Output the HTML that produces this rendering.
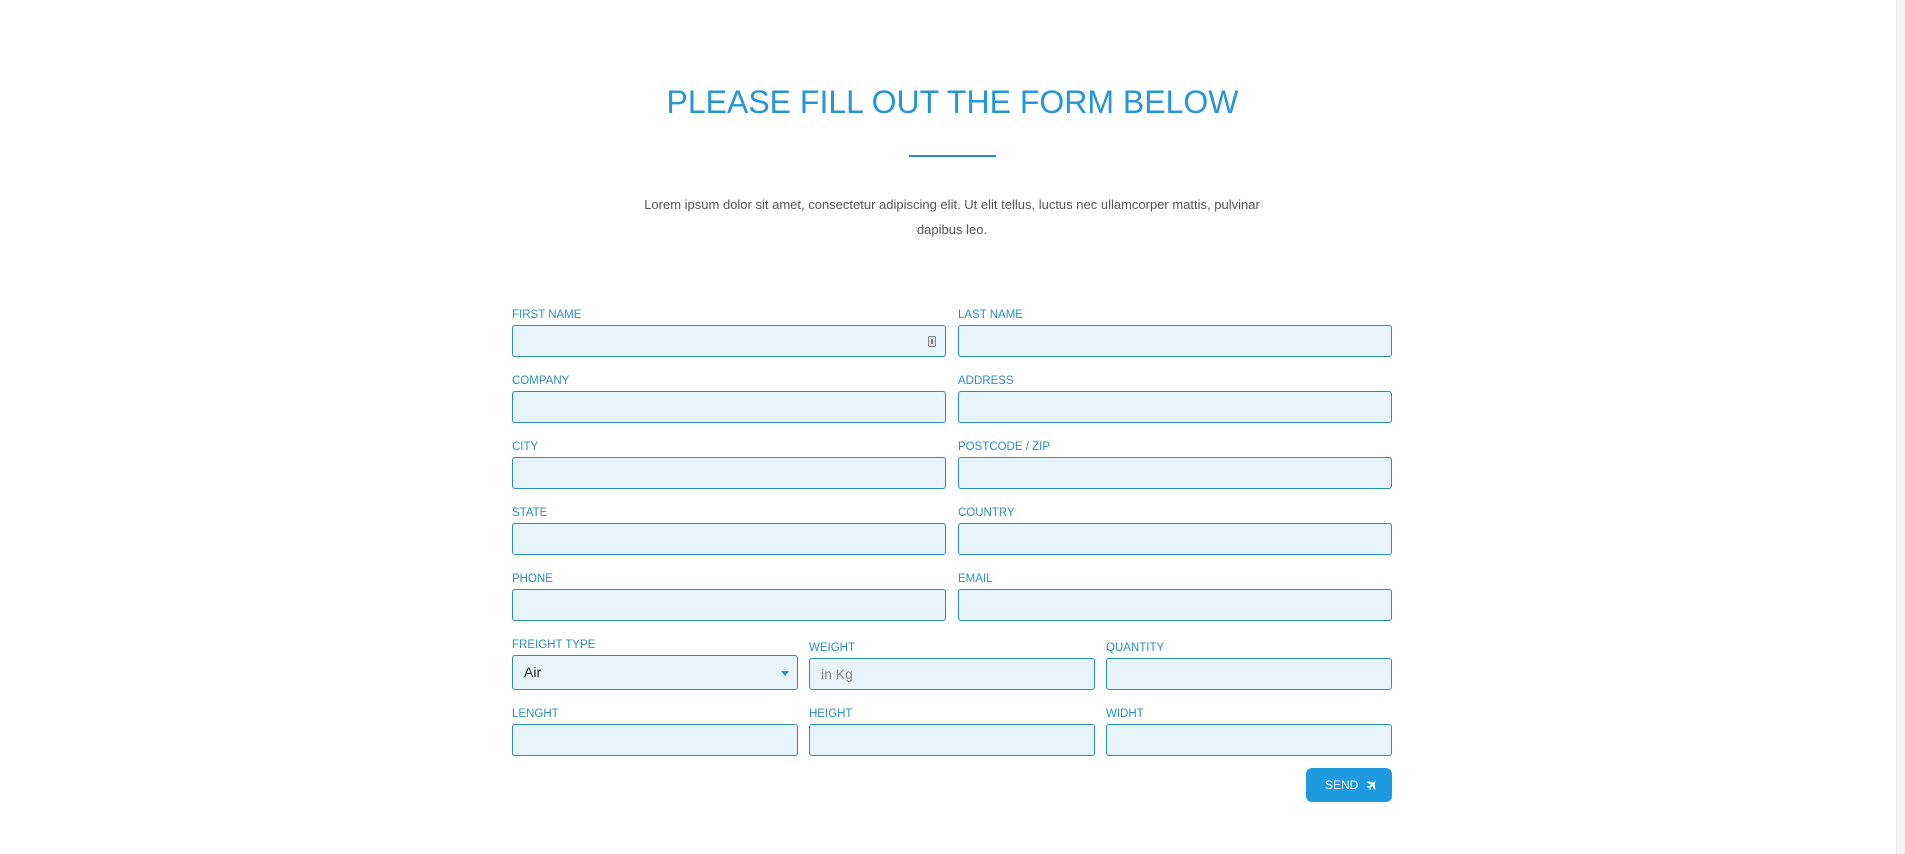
<!DOCTYPE html>
<html><head><meta charset="utf-8"><style>
*{margin:0;padding:0;box-sizing:border-box}
html,body{width:1905px;height:854px;background:#fff;overflow:hidden;font-family:"Liberation Sans",sans-serif;position:relative}
.sb{position:absolute;left:1896px;top:0;width:9px;height:854px;background:#f4f4f4;border-left:1px solid #ececec}
h1{position:absolute;left:0;width:1905px;top:84px;text-align:center;font-weight:400;font-size:32px;color:#2696d6}
.ul{position:absolute;left:909px;top:155px;width:87px;height:2px;background:#2d8fc4}
p{position:absolute;left:632px;width:640px;top:192px;text-align:center;font-size:13px;line-height:25px;color:#555}
.l{position:absolute;font-size:11.5px;color:#2d8fc4;text-transform:uppercase}
.i{position:absolute;height:32px;background:#e8f4fc;border:1px solid #2a8fbd;border-radius:3px;font-size:14px;padding-left:11px;line-height:30px}
.btn{position:absolute;left:1306px;top:768px;width:86px;height:34px;background:#1e9be0;border-radius:6px;color:#fff;font-size:12px;line-height:34px;padding-left:19px}
</style></head><body>
<div class="sb"></div>
<h1>PLEASE FILL OUT THE FORM BELOW</h1>
<div class="ul"></div>
<p>Lorem ipsum dolor sit amet, consectetur adipiscing elit. Ut elit tellus, luctus nec ullamcorper mattis, pulvinar dapibus leo.</p>

<div class="l" style="left:512px;top:309px">First Name</div>
<div class="i" style="left:512px;top:325px;width:434px"><svg style="position:absolute;right:9px;top:10px" width="8" height="11"><rect x="0.5" y="0.5" width="7" height="10" rx="1" fill="#ddd" stroke="#888"/><rect x="3" y="3" width="2" height="5" fill="#777"/></svg></div>
<div class="l" style="left:958px;top:309px">Last Name</div>
<div class="i" style="left:958px;top:325px;width:434px"></div>

<div class="l" style="left:512px;top:375px">Company</div>
<div class="i" style="left:512px;top:391px;width:434px"></div>
<div class="l" style="left:958px;top:375px">Address</div>
<div class="i" style="left:958px;top:391px;width:434px"></div>

<div class="l" style="left:512px;top:441px">City</div>
<div class="i" style="left:512px;top:457px;width:434px"></div>
<div class="l" style="left:958px;top:441px">Postcode / Zip</div>
<div class="i" style="left:958px;top:457px;width:434px"></div>

<div class="l" style="left:512px;top:507px">State</div>
<div class="i" style="left:512px;top:523px;width:434px"></div>
<div class="l" style="left:958px;top:507px">Country</div>
<div class="i" style="left:958px;top:523px;width:434px"></div>

<div class="l" style="left:512px;top:573px">Phone</div>
<div class="i" style="left:512px;top:589px;width:434px"></div>
<div class="l" style="left:958px;top:573px">Email</div>
<div class="i" style="left:958px;top:589px;width:434px"></div>

<div class="l" style="left:512px;top:639px">Freight Type</div>
<div class="i" style="left:512px;top:655px;width:286px;height:35px;line-height:33px;color:#222">Air<svg style="position:absolute;right:8px;top:15px" width="8" height="5"><path d="M0 0H8L4 5Z" fill="#2d8fc4"/></svg></div>
<div class="l" style="left:809px;top:642px">Weight</div>
<div class="i" style="left:809px;top:658px;width:286px;color:#888">in Kg</div>
<div class="l" style="left:1106px;top:642px">Quantity</div>
<div class="i" style="left:1106px;top:658px;width:286px"></div>

<div class="l" style="left:512px;top:708px">Lenght</div>
<div class="i" style="left:512px;top:724px;width:286px"></div>
<div class="l" style="left:809px;top:708px">Height</div>
<div class="i" style="left:809px;top:724px;width:286px"></div>
<div class="l" style="left:1106px;top:708px">Widht</div>
<div class="i" style="left:1106px;top:724px;width:286px"></div>

<div class="btn">SEND <svg style="position:absolute;left:60px;top:12px" width="11" height="11" viewBox="0 0 11 11"><path d="M10 1 L7 2.5 L2 1.5 L1 2.3 L5 4.5 L3.5 6.5 L1.5 6.2 L1 7 L3 8 L4 10 L4.8 9.5 L4.5 7.5 L6.5 6 L8.7 10 L9.5 9 L8.5 4 Z" fill="#fff"/></svg></div>
</body></html>
